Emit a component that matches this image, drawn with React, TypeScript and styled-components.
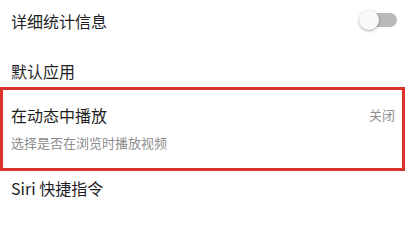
import React from "react";
import styled, { createGlobalStyle } from "styled-components";

const GlobalStyle = createGlobalStyle`
  html, body {
    margin: 0;
    padding: 0;
    background: #fff;
  }
  body {
    font-family: "Noto Sans CJK SC", "Noto Sans", "Liberation Sans", sans-serif;
    color: #1f1f1f;
  }
`;

const Page = styled.div`
  width: 407px;
  height: 213px;
  overflow: hidden;
  display: flex;
  flex-direction: column;
`;

const Row = styled.div<{ $height: number; $padTop: number }>`
  height: ${(p) => p.$height}px;
  padding: ${(p) => p.$padTop}px 11px 0 11px;
  box-sizing: border-box;
  display: flex;
  align-items: flex-start;
  justify-content: space-between;
`;

const Title = styled.div`
  font-size: 16px;
  line-height: 20px;
  color: #1f1f1f;
`;

const Highlight = styled.div`
  width: 405px;
  height: 84px;
  box-sizing: border-box;
  border: 3px solid #d8322a;
  padding: 15px 7px 0 8px;
  display: flex;
  flex-direction: column;
  gap: 9px;
`;

const HeadLine = styled.div`
  display: flex;
  justify-content: space-between;
  align-items: center;
`;

const Subtitle = styled.div`
  font-size: 13px;
  line-height: 18px;
  color: #8c8c8c;
`;

const Value = styled.div`
  font-size: 13px;
  line-height: 20px;
  color: #8f8f8f;
`;

const Switch = styled.div`
  position: relative;
  width: 38px;
  height: 20px;
  margin-top: -1px;
  margin-right: -1px;
`;

const Track = styled.div`
  position: absolute;
  left: 4px;
  right: 0;
  top: 3px;
  height: 14px;
  border-radius: 7px;
  background: #b9b9b9;
`;

const Knob = styled.div`
  position: absolute;
  left: 0;
  top: 0;
  width: 20px;
  height: 20px;
  border-radius: 50%;
  background: #fafafa;
  box-shadow: 0 1px 3px rgba(0, 0, 0, 0.35);
`;

export default function App() {
  return (
    <>
      <GlobalStyle />
      <Page>
        <Row $height={45} $padTop={11}>
          <Title>详细统计信息</Title>
          <Switch>
            <Track />
            <Knob />
          </Switch>
        </Row>
        <Row $height={42} $padTop={16}>
          <Title>默认应用</Title>
        </Row>
        <Highlight>
          <HeadLine>
            <Title>在动态中播放</Title>
            <Value>关闭</Value>
          </HeadLine>
          <Subtitle>选择是否在浏览时播放视频</Subtitle>
        </Highlight>
        <Row $height={42} $padTop={7}>
          <Title>Siri 快捷指令</Title>
        </Row>
      </Page>
    </>
  );
}
